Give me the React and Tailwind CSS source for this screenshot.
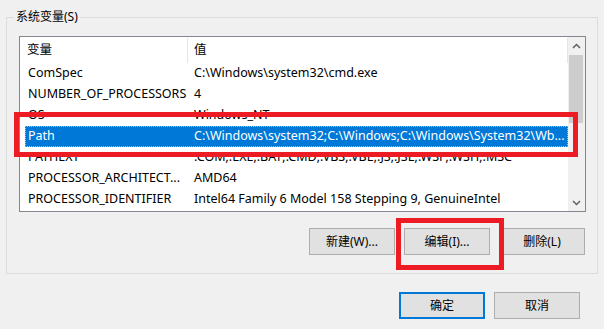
import React from 'react';

const rows = [
  { name: 'ComSpec', value: 'C:\\Windows\\system32\\cmd.exe' },
  { name: 'NUMBER_OF_PROCESSORS', value: '4' },
  { name: 'OS', value: 'Windows_NT' },
  { name: 'Path', value: 'C:\\Windows\\system32;C:\\Windows;C:\\Windows\\System32\\Wb...', selected: true },
  { name: 'PATHEXT', value: '.COM;.EXE;.BAT;.CMD;.VBS;.VBE;.JS;.JSE;.WSF;.WSH;.MSC' },
  { name: 'PROCESSOR_ARCHITECT...', value: 'AMD64' },
  { name: 'PROCESSOR_IDENTIFIER', value: 'Intel64 Family 6 Model 158 Stepping 9, GenuineIntel' },
];

const Button = ({ children, primary }) => (
  <button
    className={`w-[86px] h-[27px] bg-[#e1e1e1] text-[12px] text-black flex items-center justify-center ${primary ? 'border-2 border-[#0078d7]' : 'border border-[#adadad]'}`}
  >
    {children}
  </button>
);

const App = () => {
  return (
    <div
      className="relative w-[604px] h-[329px] bg-[#f0f0f0] overflow-hidden text-black text-[12px]"
      style={{ fontFamily: '"Noto Sans", "Noto Sans CJK SC", sans-serif' }}
    >
      {/* System variables group */}
      <div className="relative ml-[6px] mt-[17px] w-[592px] h-[257px] border border-[#dcdcdc]">
        <span className="absolute left-[7px] top-[-10px] px-[2px] bg-[#f0f0f0] leading-[18px]">系统变量(S)</span>

        {/* List */}
        <div className="ml-[12px] mt-[18px] w-[567px] h-[176px] border border-[#828790] bg-white flex text-[12.5px]">
          <div className="flex-1 flex flex-col">
            <div className="flex h-[26px] items-center">
              <div className="w-[168px] h-[25px] flex items-center pl-[7px] border-r border-[#e5e5e5]">变量</div>
              <div className="flex-1 h-[25px] flex items-center pl-[6px] border-r border-[#e5e5e5]">值</div>
            </div>
            {rows.map((row) => (
              <div
                key={row.name}
                className={`flex h-[21px] items-center ml-[5px] whitespace-nowrap overflow-hidden ${row.selected ? 'bg-[#0078d7] text-white border border-dotted border-[#ffb34d]' : 'border border-transparent'}`}
              >
                <div className="w-[162px] pl-[2px] overflow-hidden">{row.name}</div>
                <div className="flex-1 pl-[6px] overflow-hidden">{row.value}</div>
              </div>
            ))}
          </div>

          {/* Scrollbar */}
          <div className="w-[17px] bg-[#f0f0f0] flex flex-col">
            <div className="h-[17px] flex items-center justify-center">
              <svg width="9" height="6" viewBox="0 0 9 6">
                <path d="M1 5 L4.5 1.5 L8 5" fill="none" stroke="#606060" strokeWidth="1.5" />
              </svg>
            </div>
            <div className="mt-[1px] ml-[1px] w-[14px] h-[68px] bg-[#cdcdcd]" />
            <div className="flex-1" />
            <div className="h-[17px] flex items-center justify-center">
              <svg width="9" height="6" viewBox="0 0 9 6">
                <path d="M1 1 L4.5 4.5 L8 1" fill="none" stroke="#606060" strokeWidth="1.5" />
              </svg>
            </div>
          </div>
        </div>

        {/* Group buttons */}
        <div className="flex justify-end gap-[9px] mt-[16px] mr-[12px]">
          <Button>新建(W)...</Button>
          <Button>编辑(I)...</Button>
          <Button>删除(L)</Button>
        </div>
      </div>

      {/* Dialog buttons */}
      <div className="flex justify-end gap-[9px] mt-[18px] mr-[24px]">
        <Button primary>确定</Button>
        <Button>取消</Button>
      </div>

      {/* Red annotation boxes */}
      <div className="absolute left-[14px] top-[112px] w-[564px] h-[45px] border-[5px] border-[#ed1c24]" />
      <div className="absolute left-[396px] top-[218px] w-[108px] h-[52px] border-[5px] border-[#ed1c24]" />
    </div>
  );
};

export default App;
